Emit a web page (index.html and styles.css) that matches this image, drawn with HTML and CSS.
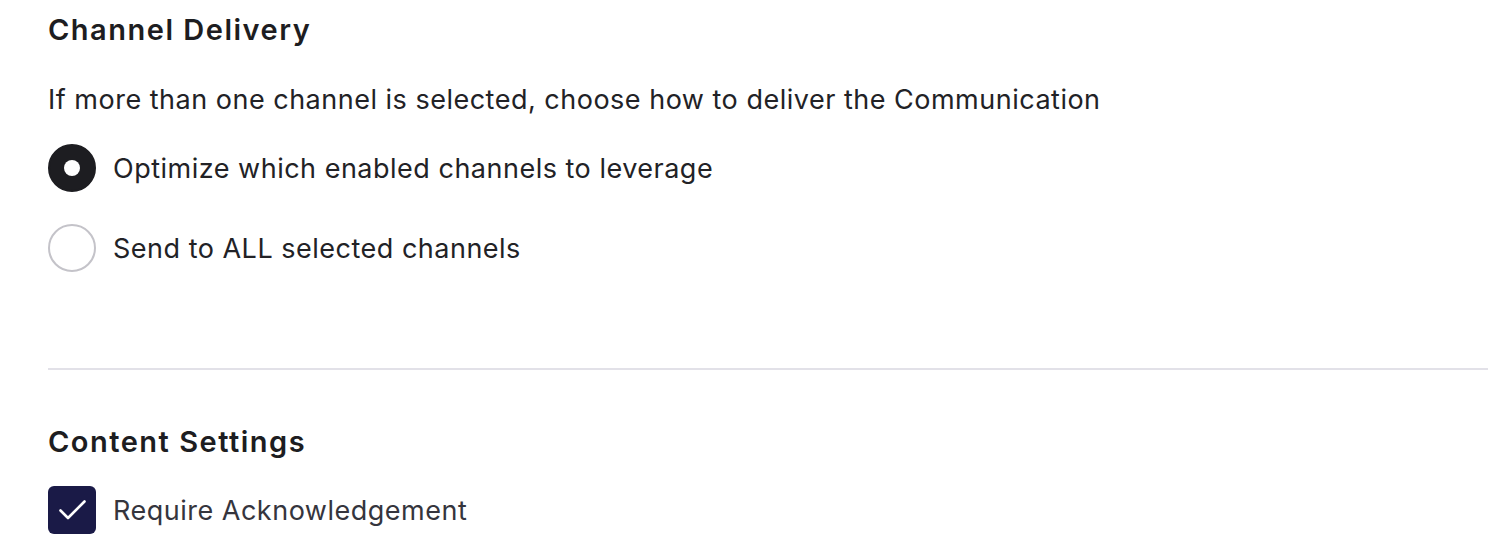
FILE: index.html
```html
<!DOCTYPE html>
<html>
<head>
  <meta charset="utf-8">
  <link rel="stylesheet" href="styles.css">
</head>
<body>
  <div class="container">
    <section class="section">
      <div class="section-title">Channel Delivery</div>
      <div class="section-desc">If more than one channel is selected, choose how to deliver the Communication</div>

      <div class="options">
        <label class="option">
          <span class="radio checked"></span>
          <span class="option-label">Optimize which enabled channels to leverage</span>
        </label>
        <label class="option">
          <span class="radio"></span>
          <span class="option-label">Send to ALL selected channels</span>
        </label>
      </div>
    </section>

    <div class="divider"></div>

    <section class="section">
      <div class="section-title">Content Settings</div>
      <label class="option check-option">
        <span class="checkbox checked">
          <svg width="48" height="48" viewBox="0 0 48 48" fill="none" stroke="white" stroke-width="2.6" stroke-linecap="round" stroke-linejoin="round">
            <path d="M12.5 24.5l7.5 7.5L36.5 15.5"/>
          </svg>
        </span>
        <span class="option-label muted">Require Acknowledgement</span>
      </label>
    </section>
  </div>
</body>
</html>
```

FILE: styles.css
```css
* {
  margin: 0;
  padding: 0;
  box-sizing: border-box;
}

body {
  width: 1504px;
  height: 552px;
  font-family: Inter, 'Noto Sans', sans-serif;
  background: #ffffff;
  color: #1f1f23;
  overflow: hidden;
}

.container {
  padding: 10px 16px 0 48px;
}

.section-title {
  font-size: 29px;
  font-weight: 600;
  line-height: 40px;
  letter-spacing: 1.5px;
  color: #1d1d21;
}

.section-desc {
  font-size: 27px;
  line-height: 36px;
  letter-spacing: 0.5px;
  margin-top: 32px;
  color: #222226;
}

.options {
  display: flex;
  flex-direction: column;
  gap: 32px;
  margin-top: 26px;
}

.option {
  display: flex;
  align-items: center;
  gap: 17px;
  height: 48px;
}

.option-label {
  font-size: 27px;
  letter-spacing: 0.5px;
  color: #222226;
}

.option-label.muted {
  color: #35353d;
}

.radio {
  width: 48px;
  height: 48px;
  border-radius: 50%;
  border: 2px solid #c4c3c9;
  background: #fff;
  flex-shrink: 0;
  display: flex;
  align-items: center;
  justify-content: center;
}

.radio.checked {
  background: #1d1d21;
  border-color: #1d1d21;
}

.radio.checked::after {
  content: '';
  width: 16px;
  height: 16px;
  border-radius: 50%;
  background: #fff;
}

.divider {
  height: 2px;
  background: #e2e1e8;
  margin: 96px 0 52px;
}

.check-option {
  margin-top: 24px;
}

.checkbox {
  width: 48px;
  height: 48px;
  border-radius: 6px;
  background: #1a1a47;
  flex-shrink: 0;
  display: flex;
  align-items: center;
  justify-content: center;
}
```
